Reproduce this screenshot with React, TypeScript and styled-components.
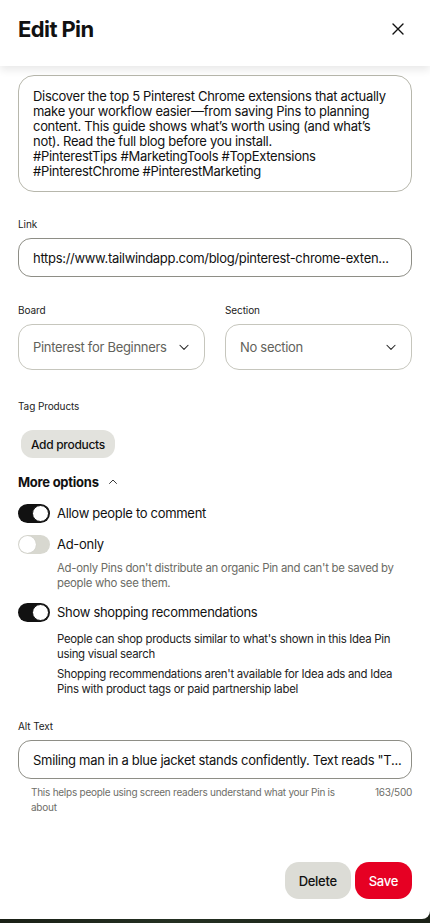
import React from "react";
import styled, { createGlobalStyle } from "styled-components";

const Global = createGlobalStyle`
  html, body { margin: 0; padding: 0; }
  body { font-family: Inter, "Noto Sans", sans-serif; color: #111; background: #1c2418; }
  * { box-sizing: border-box; }
`;

const Page = styled.div`
  width: 430px;
  height: 923px;
  background: linear-gradient(90deg, #1a2016, #243022 40%, #1b2117);
  overflow: hidden;
`;

const Panel = styled.div`
  width: 430px;
  height: 919px;
  background: #fff;
  border-bottom-right-radius: 8px;
  display: flex;
  flex-direction: column;
  overflow: hidden;
`;

const Header = styled.div`
  height: 66px;
  flex: none;
  display: flex;
  align-items: center;
  justify-content: space-between;
  padding: 0 22px 8px 18px;
  box-shadow: 0 4px 8px rgba(0, 0, 0, 0.09);
  position: relative;
  z-index: 1;
`;

const Title = styled.h1`
  margin: 0;
  font-size: 22px;
  font-weight: 700;
  letter-spacing: -0.6px;
`;

const CloseBtn = styled.button`
  border: none;
  background: none;
  padding: 0;
  width: 20px;
  height: 20px;
  display: flex;
  align-items: center;
  justify-content: center;
`;

const Body = styled.div`
  flex: 1;
  padding: 9px 18px 0 18px;
  display: flex;
  flex-direction: column;
`;

const TextArea = styled.div`
  border: 1px solid #b7b7ac;
  border-radius: 16px;
  padding: 13px 14px 12px 14px;
  font-size: 13px;
  line-height: 15px;
  color: #111;
  height: 117px;
  letter-spacing: -0.3px;
`;

const Label = styled.div<{ $mt?: number; $mb?: number }>`
  font-size: 10px;
  color: #222;
  margin-top: ${(p) => p.$mt ?? 0}px;
  margin-bottom: ${(p) => p.$mb ?? 8}px;
  line-height: 12px;
  letter-spacing: -0.1px;
`;

const Input = styled.div`
  border: 1px solid #8e8e86;
  border-radius: 13px;
  height: 39px;
  padding: 0 14px;
  display: flex;
  align-items: center;
  font-size: 13px;
  white-space: nowrap;
  overflow: hidden;
  letter-spacing: -0.3px;
`;

const Row = styled.div`
  display: grid;
  grid-template-columns: 1fr 1fr;
  gap: 20px;
`;

const Col = styled.div`
  display: flex;
  flex-direction: column;
`;

const Select = styled.div`
  border: 1px solid #c6c6bd;
  border-radius: 14px;
  height: 46px;
  padding: 0 13px 0 14px;
  display: flex;
  align-items: center;
  justify-content: space-between;
  font-size: 13px;
  color: #62625b;
  letter-spacing: -0.3px;
`;

const GreyButton = styled.button`
  border: none;
  background: #e2e2dd;
  border-radius: 12px;
  font-family: inherit;
  font-size: 12px;
  font-weight: 500;
  letter-spacing: -0.3px;
  color: #111;
  height: 28px;
  padding: 0 10px;
  align-self: flex-start;
  margin-left: 3px;
`;

const MoreOptions = styled.div`
  display: flex;
  align-items: center;
  gap: 8px;
  font-size: 13px;
  font-weight: 700;
  letter-spacing: -0.25px;
  margin-top: 16px;
  height: 16px;
`;

const ToggleRow = styled.div<{ $mt: number }>`
  display: flex;
  align-items: center;
  gap: 7px;
  margin-top: ${(p) => p.$mt}px;
  font-size: 13px;
  letter-spacing: -0.3px;
  height: 20px;
`;

const Track = styled.div<{ $on: boolean }>`
  width: 32px;
  height: 19px;
  border-radius: 10px;
  background: ${(p) => (p.$on ? "#111" : "#d8d8d0")};
  display: flex;
  align-items: center;
  justify-content: ${(p) => (p.$on ? "flex-end" : "flex-start")};
  padding: 0 1px;
  flex: none;
`;

const Knob = styled.div<{ $on: boolean }>`
  width: 17px;
  height: 17px;
  border-radius: 50%;
  background: #fff;
  border: ${(p) => (p.$on ? "1px solid #111" : "none")};
  box-shadow: ${(p) => (p.$on ? "none" : "0 0 1px rgba(0,0,0,0.15)")};
`;

const Note = styled.p<{ $dark?: boolean; $mt: number }>`
  margin: ${(p) => p.$mt}px 0 0 39px;
  font-size: 11.4px;
  line-height: 15px;
  letter-spacing: -0.28px;
  color: ${(p) => (p.$dark ? "#222" : "#6b6b65")};
`;

const HelpRow = styled.div`
  display: flex;
  justify-content: space-between;
  align-items: flex-start;
  margin-top: 6px;
  padding-left: 13px;
  font-size: 10px;
  line-height: 15px;
  letter-spacing: -0.25px;
  color: #6e6e68;
`;

const HelpText = styled.span`
  width: 312px;
`;

const Footer = styled.div`
  display: flex;
  justify-content: flex-end;
  gap: 4px;
  padding: 0 18px 20px;
`;

const ActionButton = styled.button<{ $primary?: boolean }>`
  border: none;
  height: 37px;
  border-radius: 14px;
  font-family: inherit;
  font-size: 13px;
  font-weight: 500;
  letter-spacing: -0.3px;
  padding: 0 14px;
  background: ${(p) => (p.$primary ? "#e60023" : "#dcdcd6")};
  color: ${(p) => (p.$primary ? "#fff" : "#111")};
`;

const Chevron = ({ up = false, size = 14 }: { up?: boolean; size?: number }) => (
  <svg width={size} height={size} viewBox="0 0 24 24" fill="none" stroke="#222" strokeWidth={1.8} strokeLinecap="round" strokeLinejoin="round">
    {up ? <path d="M5 15l7-7 7 7" /> : <path d="M5 9l7 7 7-7" />}
  </svg>
);

const Toggle = ({ on }: { on: boolean }) => (
  <Track $on={on}>
    <Knob $on={on} />
  </Track>
);

export default function App() {
  return (
    <Page>
      <Global />
      <Panel>
        <Header>
          <Title>Edit Pin</Title>
          <CloseBtn aria-label="Close">
            <svg width="12" height="12" viewBox="0 0 12 12" stroke="#111" strokeWidth="1.4" strokeLinecap="round">
              <path d="M1 1l10 10M11 1L1 11" />
            </svg>
          </CloseBtn>
        </Header>
        <Body>
          <TextArea>
            Discover the top 5 Pinterest Chrome extensions that actually make your workflow easier—from saving Pins to planning content. This guide shows what’s worth using (and what’s not). Read the full blog before you install.
            <br />
            #PinterestTips #MarketingTools #TopExtensions #PinterestChrome #PinterestMarketing
          </TextArea>

          <Label $mt={26}>Link</Label>
          <Input>https://www.tailwindapp.com/blog/pinterest-chrome-exten...</Input>

          <Row>
            <Col>
              <Label $mt={27}>Board</Label>
              <Select>
                Pinterest for Beginners
                <Chevron />
              </Select>
            </Col>
            <Col>
              <Label $mt={27}>Section</Label>
              <Select>
                No section
                <Chevron />
              </Select>
            </Col>
          </Row>

          <Label $mt={30} $mb={18}>Tag Products</Label>
          <GreyButton>Add products</GreyButton>

          <MoreOptions>
            More options
            <Chevron up size={12} />
          </MoreOptions>

          <ToggleRow $mt={13}>
            <Toggle on />
            Allow people to comment
          </ToggleRow>
          <ToggleRow $mt={11}>
            <Toggle on={false} />
            Ad-only
          </ToggleRow>
          <Note $mt={7}>Ad-only Pins don't distribute an organic Pin and can't be saved by people who see them.</Note>
          <ToggleRow $mt={11}>
            <Toggle on />
            Show shopping recommendations
          </ToggleRow>
          <Note $dark $mt={10}>People can shop products similar to what's shown in this Idea Pin using visual search</Note>
          <Note $dark $mt={5}>Shopping recommendations aren't available for Idea ads and Idea Pins with product tags or paid partnership label</Note>

          <Label $mt={23}>Alt Text</Label>
          <Input>Smiling man in a blue jacket stands confidently. Text reads "T...</Input>
          <HelpRow>
            <HelpText>This helps people using screen readers understand what your Pin is about</HelpText>
            <span>163/500</span>
          </HelpRow>
        </Body>
        <Footer>
          <ActionButton>Delete</ActionButton>
          <ActionButton $primary>Save</ActionButton>
        </Footer>
      </Panel>
    </Page>
  );
}
